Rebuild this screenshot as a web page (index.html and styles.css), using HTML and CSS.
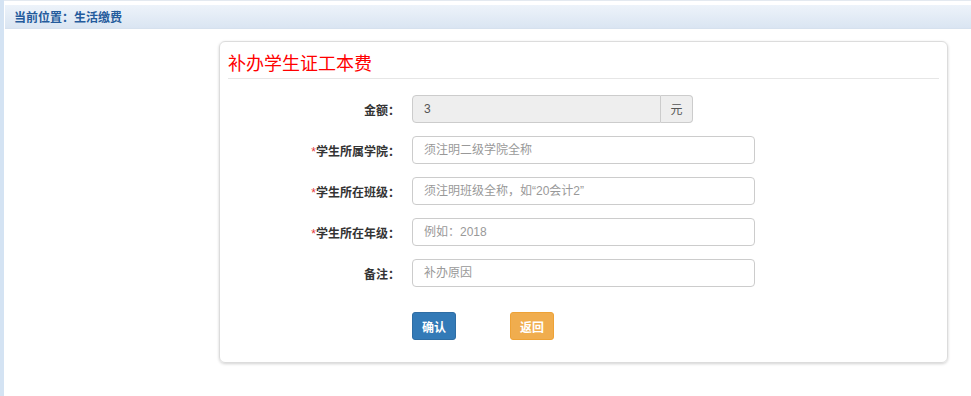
FILE: index.html
```html
<!DOCTYPE html>
<html lang="zh-CN">
<head>
    <meta charset="UTF-8">
    <title>生活缴费</title>
    <link rel="stylesheet" href="styles.css">
</head>
<body>
    <div class="page">
        <div class="location">当前位置：生活缴费</div>

        <div class="panel">
            <h2 class="panel-title">补办学生证工本费</h2>

            <form class="form">
                <div class="row">
                    <label class="label">金额：</label>
                    <div class="input-group">
                        <input class="input input-amount" type="text" value="3" disabled>
                        <span class="addon">元</span>
                    </div>
                </div>
                <div class="row">
                    <label class="label"><span class="star">*</span>学生所属学院：</label>
                    <input class="input" type="text" placeholder="须注明二级学院全称">
                </div>
                <div class="row">
                    <label class="label"><span class="star">*</span>学生所在班级：</label>
                    <input class="input" type="text" placeholder="须注明班级全称，如“20会计2”">
                </div>
                <div class="row">
                    <label class="label"><span class="star">*</span>学生所在年级：</label>
                    <input class="input" type="text" placeholder="例如：2018">
                </div>
                <div class="row">
                    <label class="label">备注：</label>
                    <input class="input" type="text" placeholder="补办原因">
                </div>

                <div class="buttons">
                    <button type="button" class="btn btn-primary">确认</button>
                    <button type="button" class="btn btn-warning">返回</button>
                </div>
            </form>
        </div>
    </div>
</body>
</html>
```

FILE: styles.css
```css
html, body {
    height: 100%;
}

body {
    margin: 0;
    padding: 0;
    font-family: "Noto Sans CJK SC", "Liberation Sans", sans-serif;
    font-size: 12px;
    color: #333;
    background-color: #fff;
    border-left: 4px solid #d4e3f3;
    box-sizing: border-box;
}

.page {
    padding: 4px 0 0 1px;
    border-top: 1px solid #e3e9f0;
}

.location {
    height: 23px;
    line-height: 23px;
    padding-left: 9px;
    font-weight: bold;
    color: #245b9c;
    background: linear-gradient(#edf3fa, #dae5f2);
    border-bottom: 1px solid #d6e1ee;
}

.panel {
    width: 711px;
    margin: 12px 0 0 214px;
    padding: 0 8px 22px;
    border: 1px solid #dcdcdc;
    border-radius: 6px;
    box-shadow: 0 1px 3px rgba(0, 0, 0, 0.18);
}

.panel-title {
    margin: 0;
    padding: 8px 0 4px;
    font-size: 18px;
    font-weight: normal;
    line-height: 24px;
    color: #f00;
    border-bottom: 1px solid #e6e6e6;
}

.form {
    padding-top: 16px;
}

.row {
    display: flex;
    align-items: center;
    margin-bottom: 13px;
}

.label {
    width: 172px;
    padding-right: 12px;
    text-align: right;
    font-weight: bold;
    color: #333;
}

.star {
    color: #e4393c;
    font-family: "Liberation Sans", sans-serif;
    font-weight: normal;
    font-size: 12px;
}

.input {
    box-sizing: border-box;
    width: 343px;
    height: 28px;
    padding: 0 11px;
    font-family: "Liberation Sans", "Noto Sans CJK SC", sans-serif;
    font-size: 12px;
    color: #555;
    border: 1px solid #ccc;
    border-radius: 4px;
    outline: none;
}

.input::placeholder {
    color: #999;
}

.input-group {
    display: flex;
}

.input-amount {
    width: 249px;
    background-color: #eee;
    border-radius: 4px 0 0 4px;
}

.addon {
    box-sizing: border-box;
    width: 32px;
    height: 28px;
    line-height: 26px;
    text-align: center;
    color: #555;
    background-color: #eee;
    border: 1px solid #ccc;
    border-left: none;
    border-radius: 0 4px 4px 0;
}

.buttons {
    display: flex;
    gap: 54px;
    padding-left: 184px;
    padding-top: 12px;
}

.btn {
    width: 44px;
    height: 28px;
    padding: 0;
    font-family: inherit;
    font-size: 12px;
    font-weight: bold;
    color: #fff;
    border: 1px solid transparent;
    border-radius: 3px;
    cursor: pointer;
}

.btn-primary {
    background-color: #337ab7;
    border-color: #2e6da4;
}

.btn-warning {
    background-color: #f0ad4e;
    border-color: #eea236;
}
```
